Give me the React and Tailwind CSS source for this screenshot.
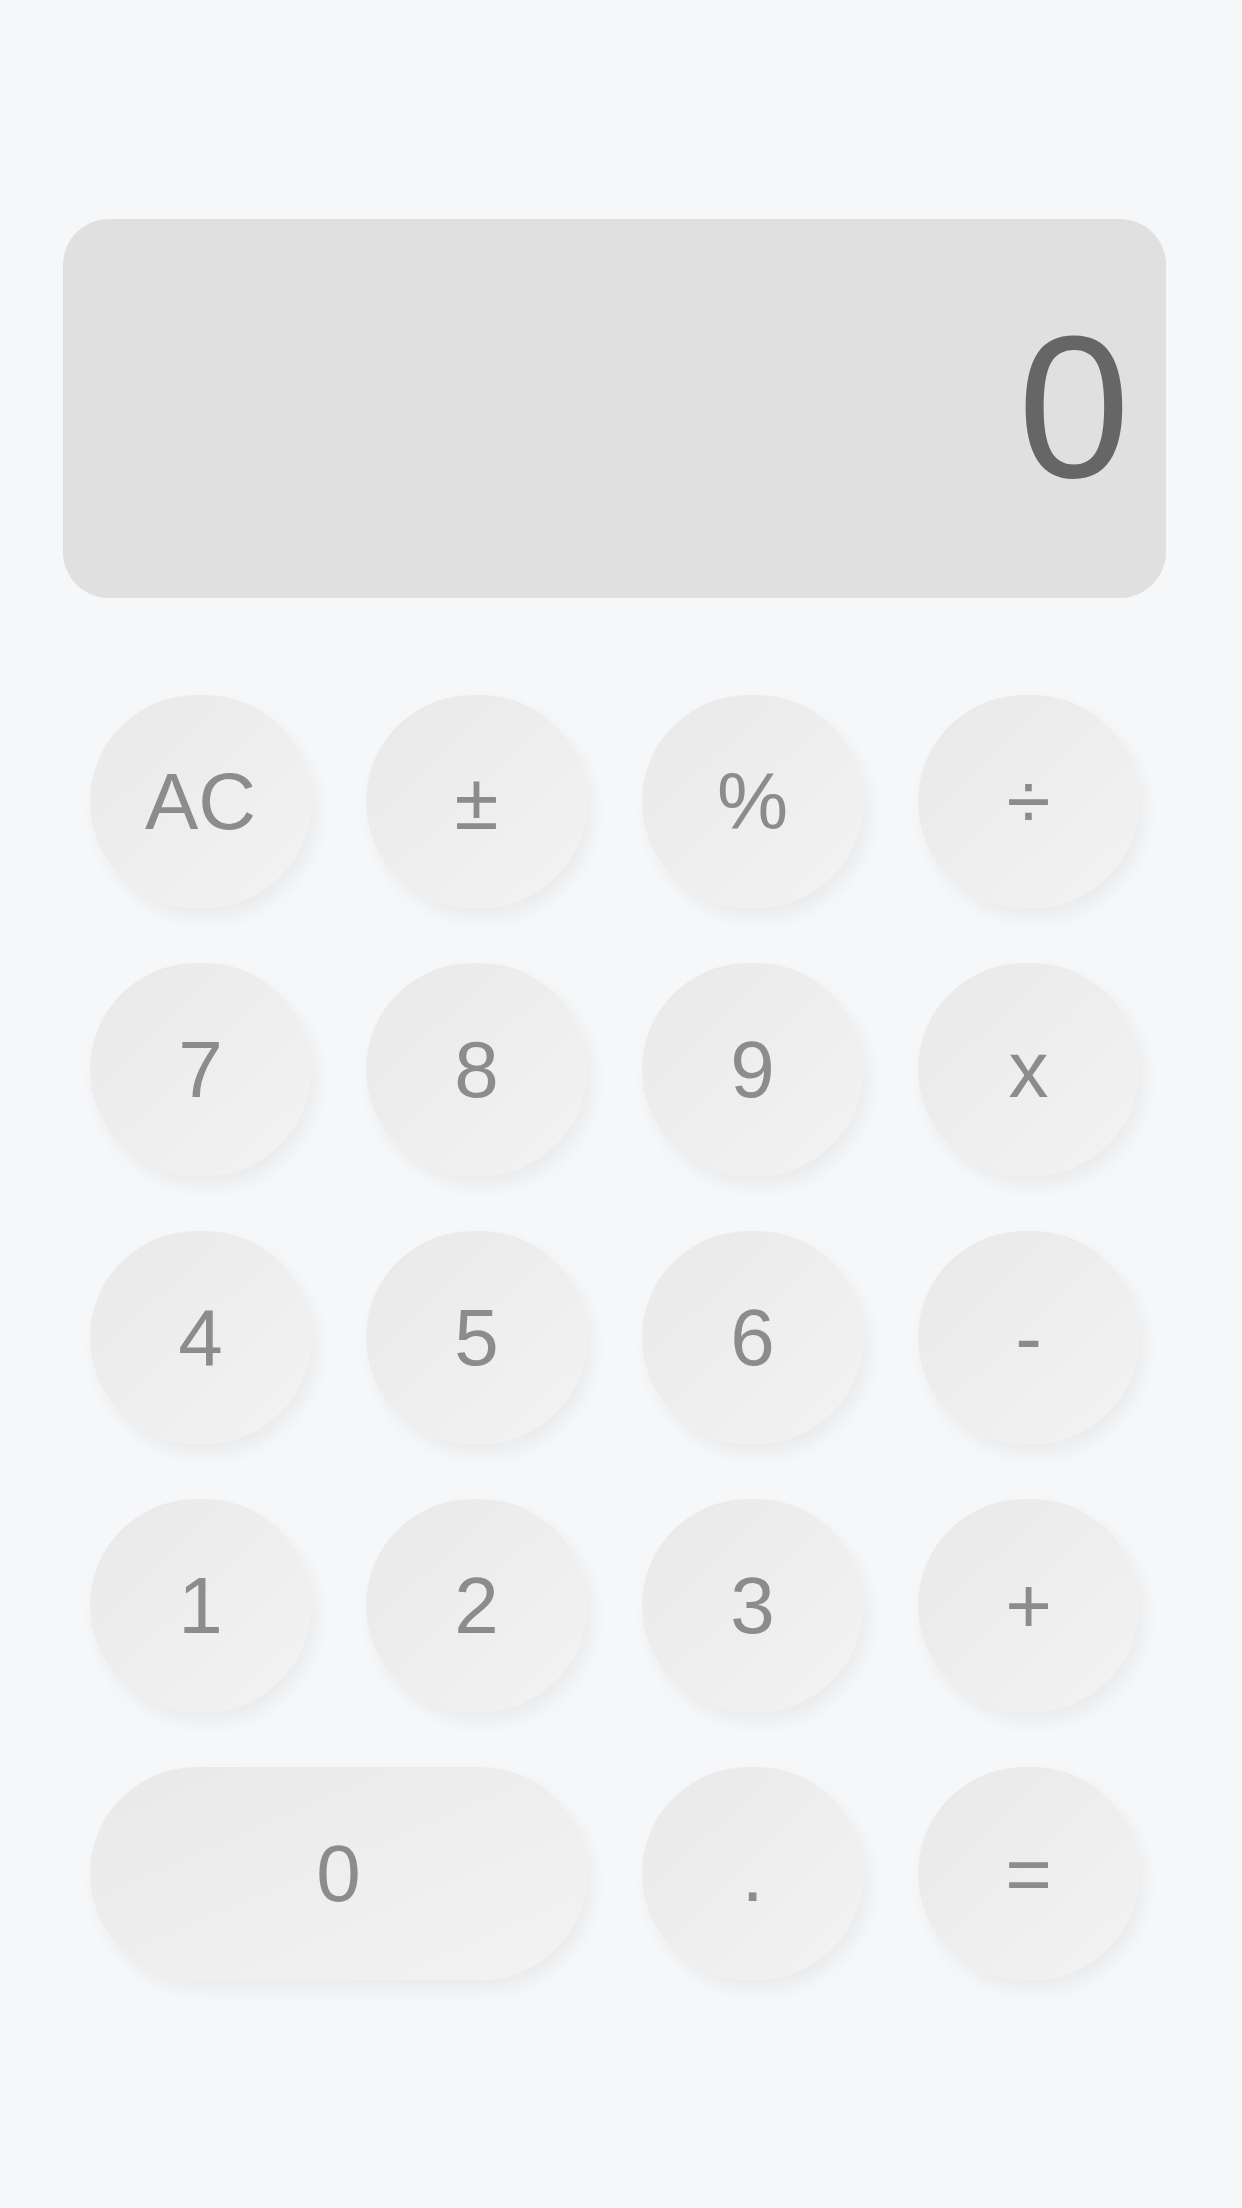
import React from 'react';

const keys = [
  { label: 'AC' },
  { label: '±' },
  { label: '%' },
  { label: '÷' },
  { label: '7' },
  { label: '8' },
  { label: '9' },
  { label: 'x' },
  { label: '4' },
  { label: '5' },
  { label: '6' },
  { label: '-' },
  { label: '1' },
  { label: '2' },
  { label: '3' },
  { label: '+' },
  { label: '0', wide: true },
  { label: '.' },
  { label: '=' },
];

const Key = ({ label, wide }) => (
  <button
    type="button"
    className={
      (wide ? 'col-span-2 ' : '') +
      'h-[213px] rounded-full bg-gradient-to-br from-[#e9e9e9] to-[#f3f3f3] text-[#8c8c8c] text-[80px] leading-none flex items-center justify-center shadow-[6px_10px_18px_rgba(0,0,0,0.05)]'
    }
  >
    {label}
  </button>
);

export default function App() {
  return (
    <div className="min-h-[2208px] w-full bg-[#f6f7f9] font-['Liberation_Sans',Arial,sans-serif]">
      <div className="pt-[219px] px-[63px] w-[1229px]">
        <div className="h-[379px] rounded-[46px] bg-[#e0e0e0] flex items-center justify-end pr-[36px]">
          <span className="text-[202px] leading-none text-[#666666] -mt-[4px]">0</span>
        </div>

        <div className="mt-[97px] mx-[27px] grid grid-cols-4 gap-x-[55px] gap-y-[55px]">
          {keys.map((k, i) => (
            <Key key={i} label={k.label} wide={k.wide} />
          ))}
        </div>
      </div>
    </div>
  );
}
